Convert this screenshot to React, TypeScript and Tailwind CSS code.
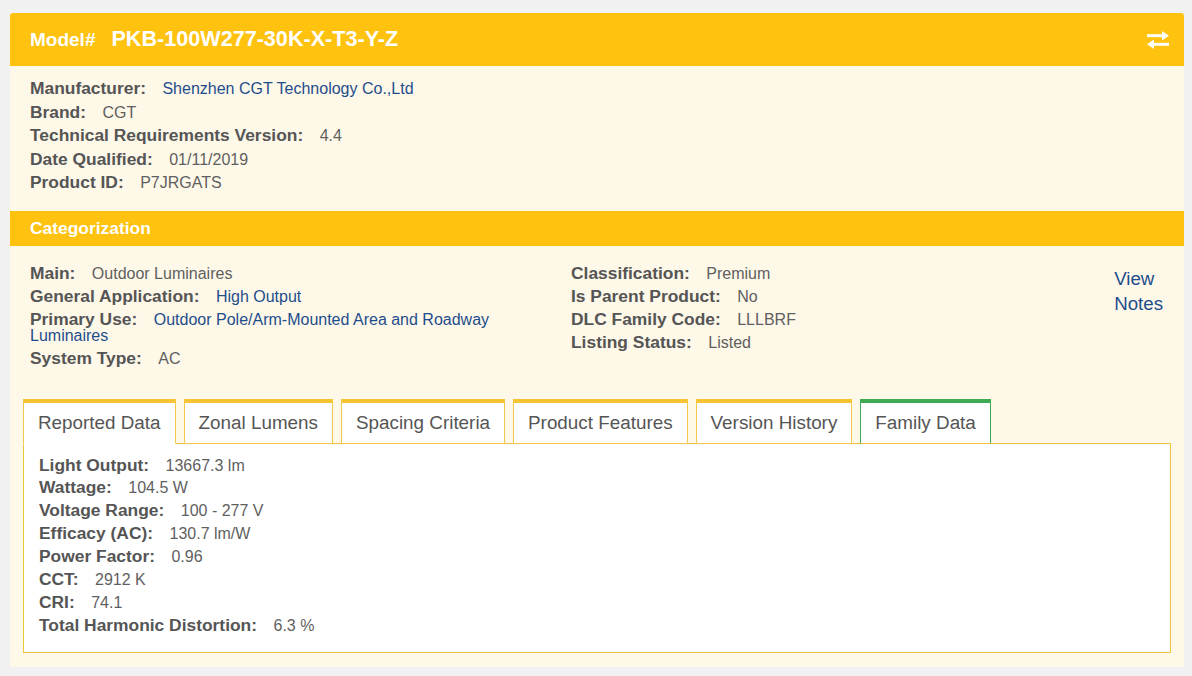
import type { ReactNode } from "react";

type Row = { label: string; value: ReactNode; link?: boolean };

const TOP: Row[] = [
  { label: "Manufacturer:", value: "Shenzhen CGT Technology Co.,Ltd", link: true },
  { label: "Brand:", value: "CGT" },
  { label: "Technical Requirements Version:", value: "4.4" },
  { label: "Date Qualified:", value: "01/11/2019" },
  { label: "Product ID:", value: "P7JRGATS" },
];

const CAT_LEFT: Row[] = [
  { label: "Main:", value: "Outdoor Luminaires" },
  { label: "General Application:", value: "High Output", link: true },
  { label: "Primary Use:", value: "Outdoor Pole/Arm-Mounted Area and Roadway Luminaires", link: true },
  { label: "System Type:", value: "AC" },
];

const CAT_RIGHT: Row[] = [
  { label: "Classification:", value: "Premium" },
  { label: "Is Parent Product:", value: "No" },
  { label: "DLC Family Code:", value: "LLLBRF" },
  { label: "Listing Status:", value: "Listed" },
];

const REPORTED: Row[] = [
  { label: "Light Output:", value: "13667.3 lm" },
  { label: "Wattage:", value: "104.5 W" },
  { label: "Voltage Range:", value: "100 - 277 V" },
  { label: "Efficacy (AC):", value: "130.7 lm/W" },
  { label: "Power Factor:", value: "0.96" },
  { label: "CCT:", value: "2912 K" },
  { label: "CRI:", value: "74.1" },
  { label: "Total Harmonic Distortion:", value: "6.3 %" },
];

const TABS = ["Reported Data", "Zonal Lumens", "Spacing Criteria", "Product Features", "Version History", "Family Data"];

function Field({ row, gap = "mb-[6px]" }: { row: Row; gap?: string }) {
  return (
    <div className={`${gap} text-[16px] leading-4`}>
      <span className="text-[17.4px] font-bold text-[#555]">{row.label}</span>{" "}
      <span className={`ml-3 ${row.link ? "text-[#1e4d8c]" : "text-[#5f5f5f]"}`}>{row.value}</span>
    </div>
  );
}

function SwapIcon() {
  return (
    <svg width="24" height="18" viewBox="0 0 24 18" fill="#fff">
      <rect x="1" y="3.2" width="17" height="3" />
      <polygon points="16,0 23,4.7 16,9.4" />
      <rect x="6" y="11.8" width="17" height="3" />
      <polygon points="8,8.6 1,13.3 8,18" />
    </svg>
  );
}

export default function App() {
  return (
    <div
      className="min-h-[676px] bg-[#f1f1f1] pl-[10px] pr-2 pt-[13px] pb-2"
      style={{ fontFamily: '"Liberation Sans", Arial, sans-serif' }}
    >
      <div className="bg-[#fef8e8] rounded-t-[3px]">
        <div className="flex h-[53px] items-center justify-between rounded-t-[3px] bg-[#fec20f] pl-5 pr-[14px] text-white">
          <div className="flex items-baseline font-bold">
            <span className="text-[19px]">Model#</span>
            <span className="ml-4 text-[21.6px]">PKB-100W277-30K-X-T3-Y-Z</span>
          </div>
          <SwapIcon />
        </div>

        <div className="px-5 pt-[14px] pb-[13px]">
          {TOP.map((r) => (
            <Field key={r.label} row={r} gap="mb-[6.5px]" />
          ))}
        </div>

        <div className="flex h-[35px] items-center bg-[#fec20f] px-5 text-[17.4px] font-bold text-white">
          Categorization
        </div>

        <div className="flex px-5 pt-[19px]">
          <div className="w-[512px]">
            {CAT_LEFT.map((r) => (
              <Field key={r.label} row={r} />
            ))}
          </div>
          <div className="ml-[29px] flex-1">
            {CAT_RIGHT.map((r) => (
              <Field key={r.label} row={r} />
            ))}
          </div>
          <div className="mr-[1px] mt-[1px] text-[18.7px] leading-[25px] text-[#1e4d8c]">
            View
            <br />
            Notes
          </div>
        </div>

        <div className="px-[13px] pt-[26px] pb-[14px]">
          <div className="relative z-10 -mb-px flex items-end">
            {TABS.map((t, i) => {
              const active = i === 0;
              const green = i === TABS.length - 1;
              return (
                <div
                  key={t}
                  className={`mr-2 border border-t-4 bg-white px-[14px] pt-2 pb-[9px] text-[18.85px] leading-[23px] text-[#555] ${
                    green ? "border-[#3faa52] border-t-[#3faa52] border-b-[#f2c640]" : "border-[#f4c94a] border-t-[#f7c431]"
                  } ${active ? "border-b-white" : ""}`}
                >
                  {t}
                </div>
              );
            })}
          </div>
          <div className="h-[210px] border border-[#f0c53e] bg-white pl-[15px] pt-[13px]">
            {REPORTED.map((r) => (
              <Field key={r.label} row={r} gap="mb-[5.95px]" />
            ))}
          </div>
        </div>
      </div>
    </div>
  );
}
